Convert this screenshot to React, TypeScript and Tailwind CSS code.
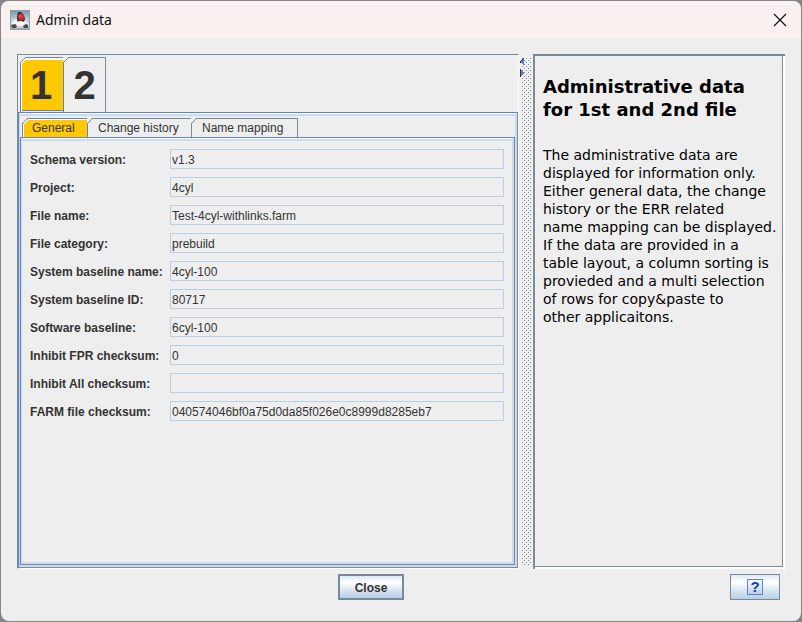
import { useState } from "react";

const fields = [
  { id: "schema", label: "Schema version:", value: "v1.3" },
  { id: "project", label: "Project:", value: "4cyl" },
  { id: "file", label: "File name:", value: "Test-4cyl-withlinks.farm" },
  { id: "category", label: "File category:", value: "prebuild" },
  { id: "sysname", label: "System baseline name:", value: "4cyl-100" },
  { id: "sysid", label: "System baseline ID:", value: "80717" },
  { id: "software", label: "Software baseline:", value: "6cyl-100" },
  { id: "fpr", label: "Inhibit FPR checksum:", value: "0" },
  { id: "all", label: "Inhibit All checksum:", value: "" },
  { id: "farm", label: "FARM file checksum:", value: "040574046bf0a75d0da85f026e0c8999d8285eb7" },
];

const dataTabs = [
  { name: "General", width: "w-[66px]" },
  { name: "Change history", width: "w-[104px]" },
  { name: "Name mapping", width: "w-[106px]" },
];

function DukeIcon() {
  return (
    <svg width="20" height="20" viewBox="0 0 20 20" aria-hidden="true">
      <defs>
        <linearGradient id="duke-bg" x1="0" y1="0" x2="0" y2="1">
          <stop offset="0" stopColor="#7592ab" />
          <stop offset="0.5" stopColor="#c3d0da" />
          <stop offset="0.8" stopColor="#dfe5e9" />
          <stop offset="1" stopColor="#858e96" />
        </linearGradient>
      </defs>
      <rect width="20" height="20" fill="url(#duke-bg)" />
      <path d="M8 2 L11 2 L14 5 L15 9 L14 12 L11 11 L8 12 L7 10 L7 6 Z" fill="#3a3634" />
      <path d="M7 12 L10 11 L14 12 L14 16 L11 15 L8 16 L6 16 Z" fill="#fbfbfc" />
      <path d="M7 9 L4 10 L2 13 L2 15 L6 14 L7 13 Z" fill="#f4f6f8" />
      <path d="M14 11 L16 11 L18 14 L17 15 L14 14 Z" fill="#eceff1" />
      <path d="M1 15 L5 14 L7 16 L6 18 L2 18 Z M13 16 L16 14 L18 15 L18 18 L14 18 Z" fill="#464b4f" />
      <circle cx="11" cy="7" r="3" fill="#d9292b" />
      <circle cx="10" cy="6" r="1" fill="#ee6a62" />
      <rect x="0.5" y="0.5" width="19" height="19" fill="none" stroke="#8fa0ae" />
    </svg>
  );
}

function TabCorner({ selected }: { selected: boolean }) {
  return (
    <svg className="absolute top-[-1px] left-[-1px]" width="6" height="6" viewBox="0 0 6 6" shapeRendering="crispEdges" aria-hidden="true">
      <path d="M0 0 H6 L0 6 Z" fill="#eeeeee" />
      {selected && <path d="M6 1 V2 L2 6 H1 V5 L5 1 Z" fill="#ffffff" />}
      <path
        d="M0 5 h1 v-1 h1 v-1 h1 v-1 h1 v-1 h1 v-1 h1 v1 h-1 v1 h-1 v1 h-1 v1 h-1 v1 h-1 v1 h-1 Z"
        fill={selected ? "#6382bf" : "#7a8a99"}
      />
    </svg>
  );
}

function Splitter() {
  return (
    <div className="w-[14px] shrink-0" role="separator" aria-orientation="vertical">
      <svg className="block h-full w-full" shapeRendering="crispEdges" aria-hidden="true">
        <defs>
          <pattern id="bumps" width="4" height="4" patternUnits="userSpaceOnUse" x="3" y="3">
            <rect x="0" y="0" width="1" height="1" fill="#7a8a99" />
            <rect x="1" y="1" width="1" height="1" fill="#ffffff" />
            <rect x="2" y="2" width="1" height="1" fill="#7a8a99" />
            <rect x="3" y="3" width="1" height="1" fill="#ffffff" />
          </pattern>
        </defs>
        <svg x="2" y="3" width="10" height="508" overflow="hidden">
          <rect width="10" height="508" fill="url(#bumps)" />
        </svg>
        <path d="M5 4 V12 L1 8 Z" fill="#6382bf" />
        <path d="M4 4 h1 v1 h-1 v1 h-1 v1 h-1 v2 h-1 v-2 h1 v-1 h1 v-1 h1 Z" fill="#333333" />
        <path d="M1 15 V24 L5 19 Z" fill="#6382bf" />
        <path d="M1 15 h1 v8 h-1 Z" fill="#333333" />
      </svg>
    </div>
  );
}

export default function App() {
  const [fileTab, setFileTab] = useState(0);
  const [tab, setTab] = useState(0);

  return (
    <div className="h-screen bg-[#858589] p-px font-['Liberation_Sans',Arial,sans-serif] text-[12px] leading-[14px] text-[#333333]">
      <div className="flex h-full flex-col overflow-hidden rounded-lg bg-[#eeeeee]">
        <header className="flex h-[37px] shrink-0 items-center bg-[#f9f0f0] pr-[13px] pl-[9px]">
          <DukeIcon />
          <h1 className="ml-[6px] flex-1 font-['Noto_Sans',sans-serif] text-[14px] leading-5 text-[#111111]">Admin data</h1>
          <button type="button" aria-label="Close window" className="p-px">
            <svg className="block" width="14" height="14" viewBox="0 0 14 14" fill="none" stroke="#111111" strokeWidth="1.2" aria-hidden="true">
              <path d="M1 1 L13 13 M13 1 L1 13" />
            </svg>
          </button>
        </header>

        <main className="flex min-h-0 flex-1 px-4 pt-4">
          <section className="flex min-w-0 flex-1 flex-col border border-t-[#7a8a99] border-r-white border-b-white border-l-[#7a8a99]">
            <div className="flex h-[57px] shrink-0 items-end pl-[2px]" role="tablist" aria-label="File">
              {["1", "2"].map((name, i) =>
                i === fileTab ? (
                  <button key={name} type="button" role="tab" aria-selected="true" className="relative h-[55px] w-[44px] border-t border-r border-l border-[#6382bf] text-[40px] leading-[50px] font-bold">
                    <span className="block h-[54px] border-t-2 border-l border-white">
                      <span className="block h-[51px] border-b border-[#6382bf] bg-[#ffc800] pr-[3px]">{name}</span>
                    </span>
                    <TabCorner selected />
                  </button>
                ) : (
                  <button key={name} type="button" role="tab" aria-selected="false" onClick={() => setFileTab(i)} className="relative h-[55px] w-[42px] border-t border-r border-[#7a8a99] text-[40px] leading-[54px] font-bold">
                    {name}
                    <TabCorner selected={false} />
                  </button>
                )
              )}
            </div>

            <div className="flex min-h-0 flex-1 flex-col border border-t-[#6382bf] border-r-[#7a8a99] border-b-[#7a8a99] border-l-[#6382bf]">
              <div className="flex min-h-0 flex-1 flex-col border-t border-r-2 border-b-2 border-l border-t-white border-r-[#c8ddf2] border-b-[#c8ddf2] border-l-[#c8ddf2]">
                <div className="flex h-[23px] shrink-0 items-end border-t-2 border-[#c8ddf2] pl-[2px]" role="tablist" aria-label="Data">
                  {dataTabs.map(({ name, width }, i) =>
                    i === tab ? (
                      <button key={name} type="button" role="tab" aria-selected="true" className={`relative h-[19px] border-t border-r border-l border-[#6382bf] text-left ${width}`}>
                        <span className="block border-t border-l border-white">
                          <span className="block h-[17px] bg-[#ffc800] pl-2 leading-[17px]">{name}</span>
                        </span>
                        <TabCorner selected />
                      </button>
                    ) : (
                      <button key={name} type="button" role="tab" aria-selected="false" onClick={() => setTab(i)} className={`relative h-[19px] border-t border-r border-[#7a8a99] pl-[10px] text-left leading-[18px] ${width}`}>
                        {name}
                        <TabCorner selected={false} />
                      </button>
                    )
                  )}
                </div>
                <div className="min-h-0 flex-1 border border-t-[#6382bf] border-r-[#7a8a99] border-b-[#7a8a99] border-l-[#6382bf]">
                  <div className="h-full border-t border-r-2 border-b-2 border-l border-t-white border-r-[#c8ddf2] border-b-[#c8ddf2] border-l-[#c8ddf2]">
                    <form className="flex flex-col gap-2 border-t-2 border-[#c8ddf2] p-2">
                      {fields.map((f) => (
                        <div key={f.id} className="flex h-5">
                          <label htmlFor={f.id} className="w-[140px] shrink-0 pt-1 font-bold">{f.label}</label>
                          <input id={f.id} readOnly defaultValue={f.value} className="h-5 min-w-0 flex-1 border border-[#b8cfe5] bg-transparent px-px pt-px outline-none" />
                        </div>
                      ))}
                    </form>
                  </div>
                </div>
              </div>
            </div>
          </section>

          <Splitter />

          <aside className="w-[252px] shrink-0 border-t-2 border-l-2 border-[#7a8a99]">
            <div className="h-full border-r-2 border-b-2 border-white">
              <div className="h-full border-r border-b border-[#7a8a99] pt-[19px] pl-2 font-['DejaVu_Sans',Verdana,sans-serif] text-black">
                <h2 className="text-[18px] leading-[23px] font-bold">
                  Administrative data
                  <br />
                  for 1st and 2nd file
                </h2>
                <p className="mt-[25px] text-[14px] leading-[18px]">
                  The administrative data are
                  <br />
                  displayed for information only.
                  <br />
                  Either general data, the change
                  <br />
                  history or the ERR related
                  <br />
                  name mapping can be displayed.
                  <br />
                  If the data are provided in a
                  <br />
                  table layout, a column sorting is
                  <br />
                  provieded and a multi selection
                  <br />
                  of rows for copy&amp;paste to
                  <br />
                  other applicaitons.
                </p>
              </div>
            </div>
          </aside>
        </main>

        <footer className="flex shrink-0 px-4 pt-[5px] pb-[21px]">
          <div className="flex flex-1 justify-center">
            <button type="button" className="h-[26px] w-[66px] border-2 border-[#7a8a99] bg-linear-[to_bottom,#dde8f3_0%,#ffffff_30%,#dde8f3_60%,#b8cfe5_100%] pt-px font-bold">Close</button>
          </div>
          <div className="px-[5px]">
            <button type="button" aria-label="Help" className="flex h-[26px] w-[50px] items-center justify-center border border-[#7a8a99] bg-linear-[to_bottom,#dde8f3_0%,#ffffff_30%,#dde8f3_60%,#b8cfe5_100%]">
              <span className="flex size-4 items-center justify-center border border-[#6382bf] bg-linear-[to_bottom,#ffffff,#b8cfe5] text-[15px] leading-[14px] font-bold text-[#0a3cc2]">?</span>
            </button>
          </div>
        </footer>
      </div>
    </div>
  );
}
